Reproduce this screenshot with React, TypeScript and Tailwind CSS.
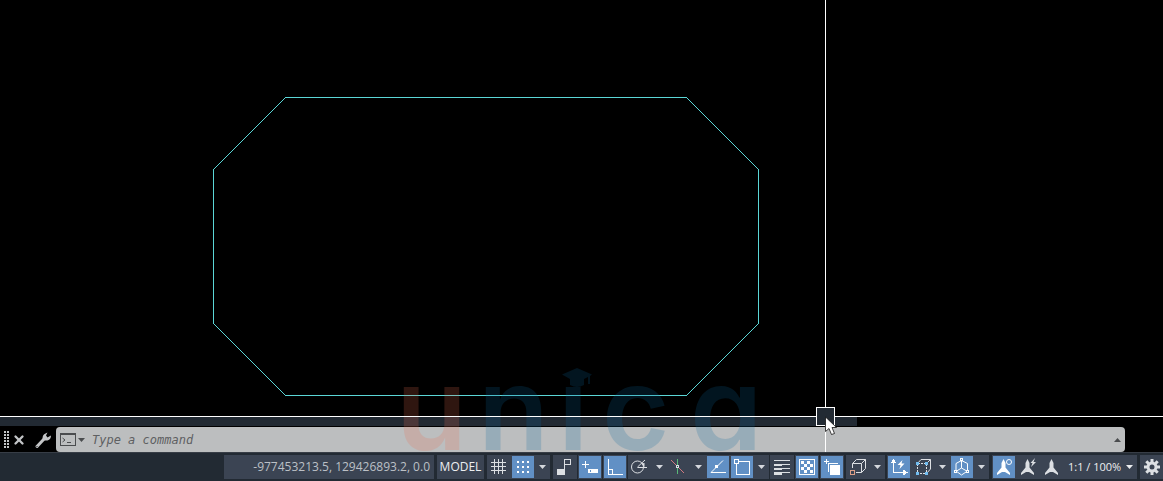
import type { ReactNode } from "react";
import { X } from "lucide-react";

interface ToolProps {
  label: string;
  active?: boolean;
  children: ReactNode;
}

function Tool({ label, active = false, children }: ToolProps) {
  return (
    <button
      type="button"
      aria-label={label}
      aria-pressed={active}
      className="flex h-6 w-6 shrink-0 items-center justify-center bg-[#3b4453]"
    >
      <span className={active ? "bg-[#6190c5] text-white" : "text-[#dcdfe3]"}>
        <svg
          width="22"
          height="22"
          viewBox="0 0 22 22"
          fill="none"
          stroke="currentColor"
          shapeRendering="crispEdges"
          className="block"
        >
          {children}
        </svg>
      </span>
    </button>
  );
}

function Arrow() {
  return (
    <svg width="7" height="4" viewBox="0 0 7 4" fill="currentColor" className="block shrink-0">
      <path d="M0 0h7L3.500 4z" />
    </svg>
  );
}

function Drop({ label }: { label: string }) {
  return (
    <button
      type="button"
      aria-label={label}
      className="flex h-6 w-[15px] shrink-0 items-center justify-center bg-[#3b4453] text-[#d5d8dd]"
    >
      <Arrow />
    </button>
  );
}

const ROCKET = "M10.500 3 12.500 7v4.500l4.500 5.500v2l-5-3h-3l-5 3v-2l4.500-5.500V7z";

function Drawing() {
  return (
    <svg
      className="absolute inset-0 h-full w-full overflow-visible"
      fill="none"
      stroke="#5bd6d6"
      shapeRendering="crispEdges"
    >
      <path d="M285.500 97.500H686.500L758.500 169.500V323.500L686.500 395.500H285.500L213.500 323.500V169.500Z" />
    </svg>
  );
}

function Watermark() {
  return (
    <div
      className="pointer-events-none absolute bottom-1 left-[396px] flex items-end font-['Inter',sans-serif] text-[116px] leading-[80px] font-semibold text-[#0a69a0] opacity-20"
      style={{ fontFeatureSettings: '"cv11"' }}
    >
      <span className="w-[82px] text-[#ec6d52]">u</span>
      <span className="w-20">n</span>
      <span className="relative w-11">
        ı
        <svg width="30" height="20" viewBox="0 0 30 20" className="absolute top-0 left-1" fill="currentColor">
          <path d="M15 0 30 6.500 28 8v8h-2V9l-4 2v6q-7 4-14 0v-6L0 6.500z" />
        </svg>
      </span>
      <span className="w-[88px]">c</span>
      <span>a</span>
    </div>
  );
}

function Crosshair() {
  return (
    <div className="pointer-events-none absolute inset-0">
      <div className="absolute inset-y-0 left-[825px] w-px bg-white" />
      <div className="absolute inset-x-0 bottom-[35px] h-px bg-white" />
      <div className="absolute bottom-[26px] left-[816px] h-[19px] w-[19px] border border-white bg-[#222a33]" />
      <svg width="14" height="20" viewBox="0 0 14 20" className="absolute bottom-4 left-[825px]">
        <path d="M.5 1v14.500l3.500-3 2.500 6 3-1-2.500-6h4.500z" fill="#fff" stroke="#111" strokeWidth=".8" />
      </svg>
    </div>
  );
}

function CommandLine() {
  return (
    <div className="flex h-[25px]">
      <div className="flex w-14 shrink-0 items-center bg-black text-[#c3c5c7]">
        <svg width="12" height="20" viewBox="0 0 12 20" className="shrink-0" shapeRendering="crispEdges">
          <path d="M4.500 1v18M7.500 1v18" stroke="currentColor" strokeWidth="2" strokeDasharray="2 1" />
        </svg>
        <button type="button" aria-label="Close" className="shrink-0">
          <X className="h-3.5 w-3.5" strokeWidth={4} />
        </button>
        <button type="button" aria-label="Customize" className="ml-2 shrink-0">
          <svg width="18" height="18" viewBox="0 0 18 18" className="block">
            <path d="M3 15.500 10 8" stroke="currentColor" strokeWidth="3" strokeLinecap="round" />
            <path
              d="M11.500 2.500 13.500 1.500 12 4.500l1.500 2 2.500-1.500 1-.5q0 4-3.500 5h-3L8.500 7.500q0-4 3-5z"
              fill="currentColor"
            />
            <path d="M2.500 15.500h1" stroke="#222" />
          </svg>
        </button>
      </div>
      <div className="flex min-w-0 flex-1 items-center rounded-sm bg-[#bcbebf] pr-1 pl-1 text-[#4a4c4e]">
        <button type="button" aria-label="Recent commands" className="flex shrink-0 items-center gap-0.5">
          <svg width="16" height="13" viewBox="0 0 16 13" fill="none" stroke="currentColor" shapeRendering="crispEdges">
            <path d="M.5.5h15v12H.5z" />
            <path d="M0 1.500h16M7 9.500h4" />
            <path d="M2.500 5 5 7 2.500 9" shapeRendering="auto" />
          </svg>
          <Arrow />
        </button>
        <input
          type="text"
          aria-label="Command"
          placeholder="Type a command"
          className="min-w-0 flex-1 bg-transparent pl-[7px] font-['DejaVu_Sans_Mono',monospace] text-xs italic outline-none placeholder:text-[#5e6062]"
        />
        <button type="button" aria-label="Show history" className="rotate-180">
          <Arrow />
        </button>
      </div>
      <div className="w-[38px] shrink-0 bg-black" />
    </div>
  );
}

function StatusBar() {
  return (
    <footer className="flex h-[29px] items-start justify-end gap-[3px] border-t border-[#373d46] bg-[#222a33] pt-0.5 font-['Open_Sans',sans-serif] text-xs">
      <div className="flex h-6 w-[210px] items-center justify-end bg-[#3b4453] pr-1 whitespace-nowrap text-[#bcc0c6]">
        -977453213.5, 129426893.2, 0.0
      </div>
      <button type="button" className="h-6 w-[47px] bg-[#3b4453] text-[#eceef0]">
        MODEL
      </button>

      {/* Grid and snap */}
      <div className="flex">
        <Tool label="Grid">
          <path d="M6.500 3v15M10.500 3v15M14.500 3v15M3 6.500h15M3 10.500h15M3 14.500h15" />
        </Tool>
        <Tool label="Snap mode" active>
          <path d="M5 6h12M5 11h12M5 16h12" strokeWidth="2" strokeDasharray="2 3" />
        </Tool>
        <Drop label="Snap settings" />
      </div>

      <div className="flex gap-0.5">
        <div className="flex gap-px">
          <Tool label="Infer constraints">
            <path d="M3 13h7v6H3z" fill="currentColor" stroke="none" />
            <path d="M10.500 19V3.500h6v5h-6" />
          </Tool>
          <Tool label="Dynamic input" active>
            <path d="M3 8.500h7M6.500 5v7" />
            <path d="M9 13h10v4H9z" fill="currentColor" stroke="none" />
            <path d="M11.500 14v2" stroke="#6190c5" />
          </Tool>
          <Tool label="Ortho mode" active>
            <path d="M4.500 3v15.500H19M4.500 13.500h4v5" />
          </Tool>
          <div className="flex">
            <Tool label="Polar tracking">
              <g shapeRendering="auto">
                <circle cx="8.500" cy="11" r="6" />
                <path d="M8.500 11 16 4M8.500 11.500H18" />
                <path d="M12 7.500l3.500 3.500v-4z" fill="currentColor" stroke="none" />
              </g>
            </Tool>
            <Drop label="Polar settings" />
            <Tool label="Isometric drafting">
              <path d="M3 4 16 17" stroke="#d07a80" shapeRendering="auto" />
              <path d="M9.500 3v15" stroke="#59b877" />
              <path d="M8.500 9.500h2v2h-2z" fill="#3b4453" />
            </Tool>
            <Drop label="Isometric settings" />
            <Tool label="Object snap tracking" active>
              <path d="M4 16.500h15" />
              <path d="M4 16.500 16 4.500" shapeRendering="auto" />
              <path d="M8 9h3v3H8z" fill="currentColor" stroke="none" />
            </Tool>
            <Tool label="Object snap" active>
              <path d="M3.500 3.500h4v4h-4zM8 5.500h10.500v13h-13V8" />
            </Tool>
            <Drop label="Object snap settings" />
          </div>
          <Tool label="Lineweight">
            <path d="M3 4.500h16M11 8.500h8M11 12.500h8M11 16.500h8" />
            <path d="M3 9h8M3 13h8" strokeWidth="2" />
            <path d="M3 17.500h8" strokeWidth="3" />
          </Tool>
          <Tool label="Transparency" active>
            <path d="M3.500 3.500h15v15h-15z" />
            <path
              d="M5 5h3v3H5zM11 5h3v3h-3zM8 8h3v3H8zM14 8h3v3h-3zM5 11h3v3H5zM11 11h3v3h-3zM8 14h3v3H8zM14 14h3v3h-3z"
              fill="currentColor"
              stroke="none"
            />
          </Tool>
          <Tool label="Selection cycling" active>
            <path d="M3 5.500h5M5.500 3v5" />
            <path d="M9 19h10V9H9z" fill="currentColor" stroke="none" />
            <path d="M7.500 16V7.500H17" />
          </Tool>
        </div>
        <div className="flex">
          <Tool label="3D object snap">
            <g shapeRendering="auto">
              <path d="M5.500 12V7.500h9v9H9M5.500 7.500l4-4h9l-4 4M18.500 3.500v9l-4 4" />
            </g>
            <path d="M3.500 14.500h4v4h-4z" stroke="#e0a088" />
          </Tool>
          <Drop label="3D object snap settings" />
        </div>
        <div className="flex">
          <Tool label="Dynamic UCS" active>
            <path d="M5.500 5v11.500H17" />
            <path d="M2.500 7 5.500 3l3 4zM15 13.500l4.500 3-4.500 3z" fill="currentColor" stroke="none" />
            <path d="m14.500 4-5 5h3l-1 4 5-5.500h-3z" fill="currentColor" stroke="none" shapeRendering="auto" />
          </Tool>
          <Tool label="Selection filtering">
            <path d="M5.500 7.500h9v10h-9z" strokeDasharray="2 1" />
            <path d="M5.500 7.500 9 3.500h9.500l-4 4M18.500 3.500V13l-4 4.500" shapeRendering="auto" />
            <path d="M4 6h3v3H4zM13 6h3v3h-3zM4 16h3v3H4zM13 16h3v3h-3z" fill="#72bdf0" stroke="none" />
          </Tool>
          <Drop label="Filter settings" />
          <Tool label="Gizmo" active>
            <g shapeRendering="auto">
              <path d="M10.500 4v8L4 16M10.500 12l7 4M10.500 4.500 5 7.500V15l5.500 4 6-4V7.500z" />
            </g>
            <path d="M9.500 2.500h2v2h-2zM3.500 14.500h2v2h-2zM15.500 14.500h2v2h-2z" fill="#6190c5" />
          </Tool>
          <Drop label="Gizmo settings" />
        </div>
      </div>

      {/* Annotation */}
      <div className="flex bg-[#3b4453]">
        <Tool label="Annotation visibility" active>
          <g shapeRendering="auto">
            <path d={ROCKET} fill="currentColor" stroke="none" />
            <circle cx="16" cy="6" r="2.500" />
          </g>
        </Tool>
        <Tool label="Auto scale">
          <g shapeRendering="auto" stroke="none" fill="currentColor">
            <path d={ROCKET} />
            <path d="m18 2-4.500 5h2L14 11l5-5h-2.500z" />
          </g>
        </Tool>
        <Tool label="Annotation scale">
          <path d={ROCKET} fill="currentColor" stroke="none" shapeRendering="auto" />
        </Tool>
        <button
          type="button"
          className="flex h-6 w-[73px] items-center justify-between px-1 text-[11px] whitespace-nowrap text-[#eceef0]"
        >
          1:1 / 100%
          <Arrow />
        </button>
      </div>
      <button
        type="button"
        aria-label="Customization"
        className="flex h-6 w-[23px] items-center justify-center bg-[#3b4453] text-[#dcdfe3]"
      >
        <svg width="16" height="16" viewBox="0 0 16 16" fill="none" stroke="currentColor">
          <circle cx="8" cy="8" r="4" strokeWidth="3" />
          <path
            d="M8 0v3M8 13v3M0 8h3M13 8h3M2.300 2.300l2.200 2.200M11.500 11.500l2.200 2.200M2.300 13.700l2.200-2.200M11.500 4.500l2.200-2.200"
            strokeWidth="3"
          />
        </svg>
      </button>
    </footer>
  );
}

export default function App() {
  return (
    <div className="flex h-screen flex-col overflow-hidden bg-black">
      <main className="relative flex min-h-0 flex-1 flex-col">
        <div className="relative flex-1">
          <Drawing />
        </div>
        <div className="mb-px h-[9px] w-[857px] bg-[#222a33]" />
        <CommandLine />
        <Watermark />
        <Crosshair />
      </main>
      <StatusBar />
    </div>
  );
}
